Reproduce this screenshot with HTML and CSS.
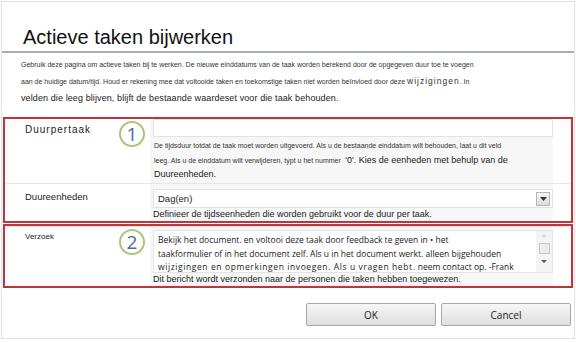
FILE: index.html
```html
<!DOCTYPE html>
<html lang="nl">
<head>
    <meta charset="UTF-8">
    <title>Actieve taken bijwerken</title>
    <link rel="stylesheet" href="styles.css">
</head>
<body>
    <div class="dialog">
        <h1>Actieve taken bijwerken</h1>

        <div class="intro">
            <div class="line tiny">Gebruik deze pagina om actieve taken bij te werken. De nieuwe einddatums van de taak worden berekend door de opgegeven duur toe te voegen</div>
            <div class="line tiny">aan de huidige datum/tijd. Houd er rekening mee dat voltooide taken en toekomstige taken niet worden beïnvloed door deze <span class="spaced">wijzigingen</span>. In</div>
            <div class="line big">velden die leeg blijven, blijft de bestaande waardeset voor die taak behouden.</div>
        </div>

        <div class="box">
            <div class="row first">
                <div class="label spaced-label">Duurpertaak</div>
                <div class="marker"><span class="circle">1</span></div>
                <div class="field">
                    <input type="text" class="text-input">
                    <div class="desc">
                        <div class="line tiny">De tijdsduur totdat de taak moet worden uitgevoerd. Als u de bestaande einddatum wilt behouden, laat u dit veld</div>
                        <div class="line tiny">leeg. Als u de einddatum wilt verwijderen, typt u het nummer <span class="big">&nbsp;'0'. Kies de eenheden met behulp van de</span></div>
                        <div class="line big">Duureenheden.</div>
                    </div>
                </div>
            </div>
            <div class="row">
                <div class="label">Duureenheden</div>
                <div class="marker"></div>
                <div class="field">
                    <div class="select">
                        <span>Dag(en)</span>
                        <span class="drop">
                            <svg width="7" height="4" viewBox="0 0 7 4"><path d="M0 0h7L3.5 4z" fill="#333"/></svg>
                        </span>
                    </div>
                    <div class="note">Definieer de tijdseenheden die worden gebruikt voor de duur per taak.</div>
                </div>
            </div>
        </div>

        <div class="box second">
            <div class="row">
                <div class="label small-label">Verzoek</div>
                <div class="marker"><span class="circle">2</span></div>
                <div class="field">
                    <div class="textarea">
                        <div class="textarea-text">
                            <div>Bekijk het document. en voltooi deze taak door feedback te geven in • het</div>
                            <div>taakformulier of in het document zelf. Als u in het document werkt. alleen bijgehouden</div>
                            <div><span class="spaced">wijzigingen en opmerkingen invoegen. Als u vragen hebt.</span> neem contact op. -Frank</div>
                        </div>
                        <div class="scroll">
                            <span class="arrow up"></span>
                            <span class="thumb"></span>
                            <span class="arrow down"></span>
                        </div>
                    </div>
                    <div class="note">Dit bericht wordt verzonden naar de personen die taken hebben toegewezen.</div>
                </div>
            </div>
        </div>

        <div class="buttons">
            <button>OK</button>
            <button>Cancel</button>
        </div>
    </div>
</body>
</html>
```

FILE: styles.css
```css
body {
    margin: 0;
    background-color: white;
    font-family: "Liberation Sans", Arial, sans-serif;
    color: #222;
}
.dialog {
    margin: 1px;
    height: 338px;
    border: 1px solid #e2e2e2;
    box-sizing: border-box;
}
h1 {
    margin: 0;
    padding: 24px 0 0 21px;
    height: 25px;
    font-size: 20px;
    font-weight: normal;
    color: #111;
    border-bottom: 2px solid #a7aeb5;
}
.intro {
    padding: 3px 18px 0 19px;
    height: 61px;
}
.line {
    height: 17px;
    line-height: 17px;
    white-space: nowrap;
}
.tiny {
    font-size: 7px;
    color: #333;
}
.spaced {
    letter-spacing: 1px;
    font-size: 8.5px;
}
.big {
    font-size: 9px;
    color: #222;
}
.intro .big {
    letter-spacing: 0.1px;
}
.box {
    border: 2px solid #c1353a;
    margin: 0 1px;
}
.box.second {
    margin-top: 1px;
}
.row {
    display: grid;
    grid-template-columns: 109px 36px 1fr;
    border-top: 1px solid #e6e6e6;
    padding-right: 18px;
}
.row.first {
    border-top: none;
}
.label {
    padding: 7px 0 0 20px;
    font-size: 9.5px;
    color: #222;
}
.spaced-label {
    padding-top: 5px;
    letter-spacing: 1px;
    font-size: 10px;
}
.small-label {
    padding-top: 5px;
    font-size: 8px;
}
.marker {
    display: flex;
    justify-content: center;
    padding-top: 2px;
}
.circle {
    width: 22px;
    height: 22px;
    border: 2px solid #a9c579;
    border-radius: 50%;
    display: flex;
    align-items: center;
    justify-content: center;
    font-size: 19px;
    color: #4c6a96;
    font-family: "Open Sans", sans-serif;
}
.field {
    background-color: #f7f7f7;
    padding: 0 0 0 3px;
}
.text-input {
    display: block;
    width: 100%;
    height: 18px;
    margin: 0;
    border: 1px solid #e2e2e2;
    box-sizing: border-box;
    background: white;
}
.desc {
    padding: 2px 0 2px 1px;
}
.desc .line {
    height: 14px;
    line-height: 14px;
}
.note {
    height: 13px;
    line-height: 12px;
    font-size: 9px;
    color: #222;
    white-space: nowrap;
}
.select {
    display: flex;
    align-items: center;
    justify-content: space-between;
    height: 17px;
    margin-top: 5px;
    padding: 0 2px 0 4px;
    border: 1px solid #e2e2e2;
    background: white;
    font-size: 9.5px;
}
.drop {
    display: flex;
    align-items: center;
    justify-content: center;
    width: 12px;
    height: 12px;
    border: 1px solid #b5b5b5;
    background: linear-gradient(#f7f7f7, #dcdcdc);
}
.textarea {
    display: flex;
    height: 43px;
    margin-top: 3px;
    border: 1px solid #e4e4e4;
    background: white;
    box-sizing: border-box;
}
.textarea-text {
    flex: 1;
    padding: 2px 4px 0;
    font-family: "Open Sans", sans-serif;
    font-size: 8.5px;
    line-height: 13.5px;
    color: #222;
    white-space: nowrap;
    overflow: hidden;
}
.textarea .spaced {
    letter-spacing: 0.6px;
    font-size: 8.5px;
}
.scroll {
    width: 16px;
    display: flex;
    flex-direction: column;
    align-items: center;
    justify-content: space-between;
    padding: 3px 0 9px;
    background: #f4f4f4;
}
.thumb {
    width: 9px;
    height: 9px;
    border: 1px solid #c8c8c8;
    background: #ececec;
}
.arrow {
    width: 0;
    height: 0;
    border-left: 3px solid transparent;
    border-right: 3px solid transparent;
}
.arrow.up {
    border-bottom: 3px solid #d8d8d8;
}
.arrow.down {
    border-top: 3px solid #555;
}
.buttons {
    display: flex;
    justify-content: flex-end;
    gap: 5px;
    padding: 15px 3px 0 0;
}
button {
    width: 130px;
    height: 23px;
    border: 1px solid #a7a7a7;
    border-radius: 2px;
    background: linear-gradient(#f6f6f6, #dedede);
    font-family: "Open Sans", sans-serif;
    font-size: 10px;
    color: #222;
}
```
